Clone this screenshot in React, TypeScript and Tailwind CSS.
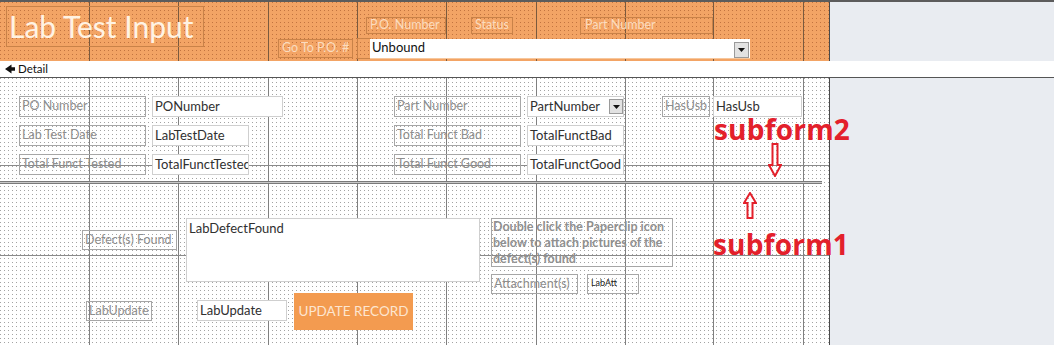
import React from "react";

const detailDots =
  "[background-image:linear-gradient(90deg,transparent_1px,#ffffff_1px),linear-gradient(#a3a3a3_1px,#ffffff_1px)] [background-size:4px_4px]";
const headerDots =
  "[background-image:linear-gradient(90deg,transparent_1px,#f3a465_1px),linear-gradient(#c27440_1px,#f3a465_1px)] [background-size:4px_4px]";

const gridX = [89, 178, 268, 357, 446, 536, 625, 713, 803];

function VLines({ color }: { color: string }) {
  return (
    <>
      {gridX.map((x) => (
        <div
          key={x}
          className={`absolute top-0 bottom-0 w-px ${color}`}
          style={{ left: x }}
        />
      ))}
    </>
  );
}

type CtlProps = {
  w: number;
  h?: number;
  children?: React.ReactNode;
  className?: string;
};

function Ctl({ w, h = 20, children, className = "" }: CtlProps) {
  return (
    <div
      className={`relative flex shrink-0 items-center overflow-hidden whitespace-nowrap ${className}`}
      style={{ width: w, height: h }}
    >
      {children}
    </div>
  );
}

function Label(p: CtlProps) {
  return (
    <Ctl
      {...p}
      className={`border border-[#a6a6a6] pl-[2px] text-[12.5px] text-[#8e8e8e] ${p.className ?? ""}`}
    />
  );
}

function TextBox(p: CtlProps) {
  return (
    <Ctl
      {...p}
      className={`border border-[#cfcfcf] bg-white pl-[2px] text-[13px] text-[#303030] ${p.className ?? ""}`}
    />
  );
}

function HeaderLabel(p: CtlProps) {
  return (
    <Ctl
      {...p}
      className={`border border-[#c98248] pl-[3px] text-[12.5px] text-[#fbdcbf] ${p.className ?? ""}`}
    />
  );
}

function DropBtn({ className = "" }: { className?: string }) {
  return (
    <div
      className={`absolute flex items-center justify-center border border-[#9a9a9a] bg-[#e2e2e2] ${className}`}
    >
      <svg width="7" height="4" viewBox="0 0 7 4">
        <path d="M0 0H7L3.5 4Z" fill="#111" />
      </svg>
    </div>
  );
}

export default function App() {
  return (
    <div className="flex h-[345px] w-[1054px] flex-col overflow-hidden bg-[#e9ecf1] font-['Lato',sans-serif]">
      {/* top border */}
      <div className="h-[2px] shrink-0 bg-[#5c5c5c]" />

      {/* Form header */}
      <div className="flex h-[59px] shrink-0">
        <div
          className={`relative h-full w-[830px] shrink-0 border-r border-[#4a4a4a] ${headerDots}`}
        >
          <VLines color="bg-[#7a5a3e]" />
          <div className="relative flex h-full items-start pl-[6px] pt-[4px]">
            <Ctl
              w={198}
              h={41}
              className="border border-[#c98248] pl-[2px] text-[30px] leading-none text-[#fff3e4]"
            >
              <span className="-mt-[2px]">Lab Test Input</span>
            </Ctl>
            <div className="ml-[74px] flex flex-col gap-[4px] pt-[11px]">
              <div className="flex gap-[25px] pl-[88px]">
                <HeaderLabel w={80} h={17}>P.O. Number</HeaderLabel>
                <HeaderLabel w={42} h={17}>Status</HeaderLabel>
                <HeaderLabel w={133} h={17} className="ml-[42px] pl-[4px]">
                  Part Number
                </HeaderLabel>
              </div>
              <div className="flex items-center">
                <HeaderLabel w={75} h={19}>Go To P.O. #</HeaderLabel>
                <div className="ml-[4px] h-[21px] w-[14px] border border-[#c98248]" />
                <Ctl
                  w={380}
                  h={20}
                  className="-ml-px border-b border-[#f7c79c] bg-white pl-[2px] text-[13px] text-[#111]"
                >
                  Unbound
                  <DropBtn className="right-[1px] top-[3px] h-[16px] w-[15px]" />
                </Ctl>
              </div>
            </div>
          </div>
        </div>
        <div className="flex-1" />
      </div>

      {/* Detail section bar */}
      <div className="flex h-[16px] shrink-0 items-center gap-[3px] bg-white pl-[5px] text-[11.5px] text-[#111]">
        <svg width="10" height="10" viewBox="0 0 10 10">
          <path d="M0 5L6.5 0.5V3.2H10V6.8H6.5V9.5Z" fill="#111" />
        </svg>
        <span>Detail</span>
      </div>
      <div className="h-px shrink-0 bg-[#555]" />

      {/* Detail */}
      <div className="flex flex-1">
        <div
          className={`relative h-full w-[830px] shrink-0 border-r border-[#4a4a4a] ${detailDots}`}
        >
          <VLines color="bg-[#808080]" />
          <div className="absolute left-0 right-0 top-[87px] h-px bg-[#8a8a8a]" />
          <div className="absolute left-0 right-0 top-[177px] h-px bg-[#8a8a8a]" />

          <div className="relative flex flex-col">
            {/* upper fields (subform2) */}
            <div className="flex h-[103px] pl-[19px] pt-[18px]">
              <div className="grid grid-cols-[127px_auto] content-start gap-x-[6px] gap-y-[8px]">
                <Label w={127} h={21}>PO Number</Label>
                <TextBox w={131} h={21}>PONumber</TextBox>
                <Label w={127} h={21}>Lab Test Date</Label>
                <TextBox w={97} h={21}>LabTestDate</TextBox>
                <Label w={127} h={21}>Total Funct Tested</Label>
                <TextBox w={97} h={21}>TotalFunctTested</TextBox>
              </div>
              <div className="ml-[111px] grid grid-cols-[127px_auto] content-start gap-x-[6px] gap-y-[8px]">
                <Label w={127} h={21}>Part Number</Label>
                <TextBox w={97} h={21}>
                  PartNumber
                  <DropBtn className="left-[81px] top-[2px] h-[15px] w-[14px]" />
                </TextBox>
                <Label w={127} h={21}>Total Funct Bad</Label>
                <TextBox w={97} h={21}>TotalFunctBad</TextBox>
                <Label w={127} h={21}>Total Funct Good</Label>
                <TextBox w={97} h={21}>TotalFunctGood</TextBox>
              </div>
              <div className="ml-[38px] flex items-start gap-[3px]">
                <Label w={48} h={21}>HasUsb</Label>
                <TextBox w={89} h={21}>HasUsb</TextBox>
              </div>
            </div>

            {/* subform separator */}
            <div className="h-[3px] w-[822px] border-y border-[#7a7a7a] bg-[#c8c8c8]" />

            {/* lower fields (subform1) */}
            <div className="flex pt-[34px]">
              <div className="flex flex-col">
                <div className="flex items-start">
                  <Label w={95} h={20} className="ml-[82px] mt-[12px]">
                    Defect(s) Found
                  </Label>
                  <TextBox
                    w={294}
                    h={64}
                    className="ml-[9px] items-start"
                  >
                    LabDefectFound
                  </TextBox>
                </div>
                <div className="mt-[11px] flex items-start">
                  <Label w={66} h={20} className="ml-[86px] mt-[8px]">
                    LabUpdate
                  </Label>
                  <TextBox w={90} h={21} className="ml-[45px] mt-[7px]">
                    LabUpdate
                  </TextBox>
                  <div className="ml-[7px] flex h-[37px] w-[119px] items-center justify-center bg-[#f39b50] text-[13.5px] text-[#fde6d0]">
                    UPDATE RECORD
                  </div>
                </div>
              </div>
              <div className="ml-[11px] flex flex-col gap-[7px]">
                <Ctl
                  w={182}
                  h={49}
                  className="items-start border border-[#a6a6a6] pl-[1px] text-[12.5px] font-bold leading-[16px] text-[#909090]"
                >
                  <span>
                    Double click the Paperclip icon
                    <br />
                    below to attach pictures of the
                    <br />
                    defect(s) found
                  </span>
                </Ctl>
                <div className="flex gap-[9px]">
                  <Label w={87} h={20}>Attachment(s)</Label>
                  <Ctl
                    w={52}
                    h={20}
                    className="items-start border border-[#a6a6a6] pl-[3px] pt-[1px] text-[9px] text-[#222]"
                  >
                    LabAtt
                  </Ctl>
                </div>
              </div>
            </div>
          </div>

          {/* annotations drawn over the canvas */}
          <div className="absolute left-[714px] top-[37px] whitespace-nowrap font-['Open_Sans',sans-serif] text-[28px] font-bold leading-none tracking-[0.2px] text-[#e3202b]">
            subform2
          </div>
          <svg
            className="absolute left-[768px] top-[65px]"
            width="14"
            height="34"
            viewBox="0 0 14 34"
          >
            <path
              d="M4.5 1H9.5V22H13L7 33L1 22H4.5Z"
              fill="none"
              stroke="#e3202b"
              strokeWidth="2"
            />
          </svg>
          <svg
            className="absolute left-[743px] top-[114px]"
            width="14"
            height="27"
            viewBox="0 0 14 27"
          >
            <path
              d="M7 1L13 11H9.5V26H4.5V11H1Z"
              fill="none"
              stroke="#e3202b"
              strokeWidth="2"
            />
          </svg>
          <div className="absolute left-[713px] top-[152px] whitespace-nowrap font-['Open_Sans',sans-serif] text-[28px] font-bold leading-none tracking-[0.2px] text-[#e3202b]">
            subform1
          </div>
        </div>
        <div className="flex-1" />
      </div>
    </div>
  );
}
